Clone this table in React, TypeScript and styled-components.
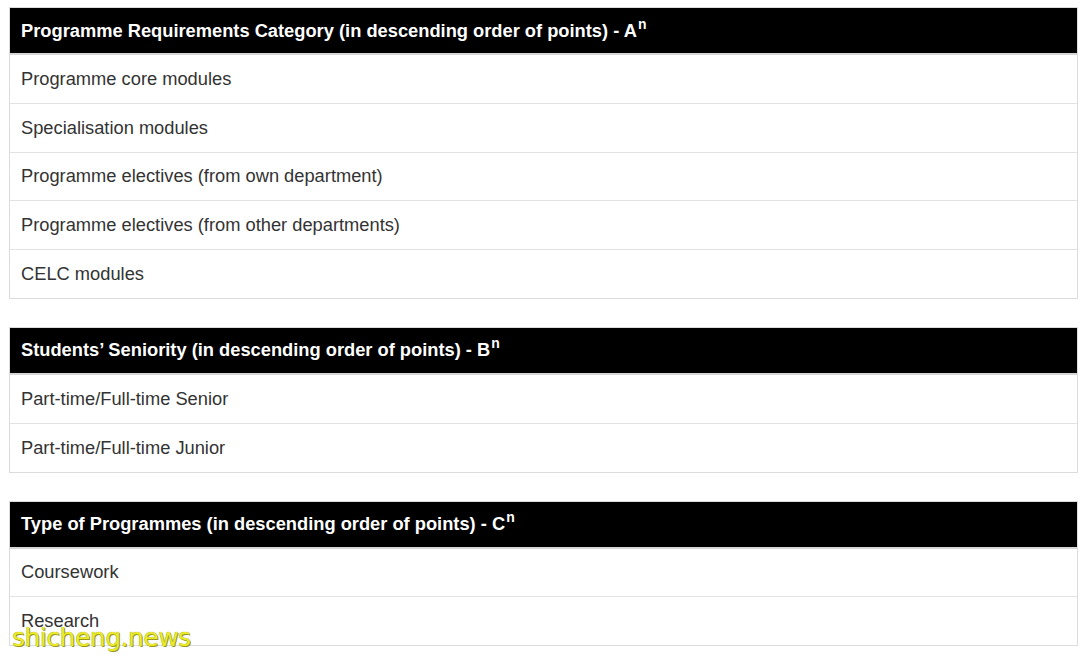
import React from "react";
import styled, { createGlobalStyle } from "styled-components";

const Global = createGlobalStyle`
  html, body { margin: 0; padding: 0; background: #fff; }
  body { font-family: "Liberation Sans", Arial, sans-serif; }
`;

const Page = styled.div`
  position: relative;
  width: 1080px;
  height: 658px;
  overflow: hidden;
  padding: 7px 4px 0 9px;
  box-sizing: border-box;
  display: flex;
  flex-direction: column;
  gap: 28px;
`;

const Table = styled.div`
  width: 1067px;
  flex-shrink: 0;
  border: 1px solid #dcdcdc;
  display: flex;
  flex-direction: column;
`;

const Header = styled.div`
  height: 45px;
  flex-shrink: 0;
  background: #000;
  color: #fff;
  font-weight: bold;
  font-size: 18.3px;
  display: flex;
  align-items: center;
  padding-left: 11px;
  border-bottom: 2px solid #d6d6d6;
`;

const HeaderText = styled.span`
  line-height: 22px;
`;

const Sup = styled.sup`
  font-size: 14px;
  vertical-align: 8px;
  line-height: 0;
  margin-left: 1px;
`;

const Row = styled.div`
  height: 47.8px;
  display: flex;
  align-items: center;
  padding-left: 11px;
  color: #333;
  font-size: 18.3px;
  border-top: 1px solid #e2e2e2;
  &:first-of-type { border-top: none; }
`;

const Watermark = styled.div`
  position: absolute;
  left: 12px;
  top: 623px;
  font-family: "DejaVu Sans", sans-serif;
  font-size: 25px;
  letter-spacing: -0.5px;
  color: #eaea2a;
  text-shadow: 0 0 1px #8a8a10, 1px 1px 0 #9a9a20;
`;

const tables = [
  {
    title: "Programme Requirements Category (in descending order of points) - A",
    rows: [
      "Programme core modules",
      "Specialisation modules",
      "Programme electives (from own department)",
      "Programme electives (from other departments)",
      "CELC modules",
    ],
  },
  {
    title: "Students’ Seniority (in descending order of points) - B",
    rows: ["Part-time/Full-time Senior", "Part-time/Full-time Junior"],
  },
  {
    title: "Type of Programmes (in descending order of points) - C",
    rows: ["Coursework", "Research"],
  },
];

export default function App() {
  return (
    <>
      <Global />
      <Page>
        {tables.map((t) => (
          <Table key={t.title}>
            <Header>
              <HeaderText>
                {t.title}
                <Sup>n</Sup>
              </HeaderText>
            </Header>
            <div>
              {t.rows.map((r) => (
                <Row key={r}>{r}</Row>
              ))}
            </div>
          </Table>
        ))}
        <Watermark>shicheng.news</Watermark>
      </Page>
    </>
  );
}
